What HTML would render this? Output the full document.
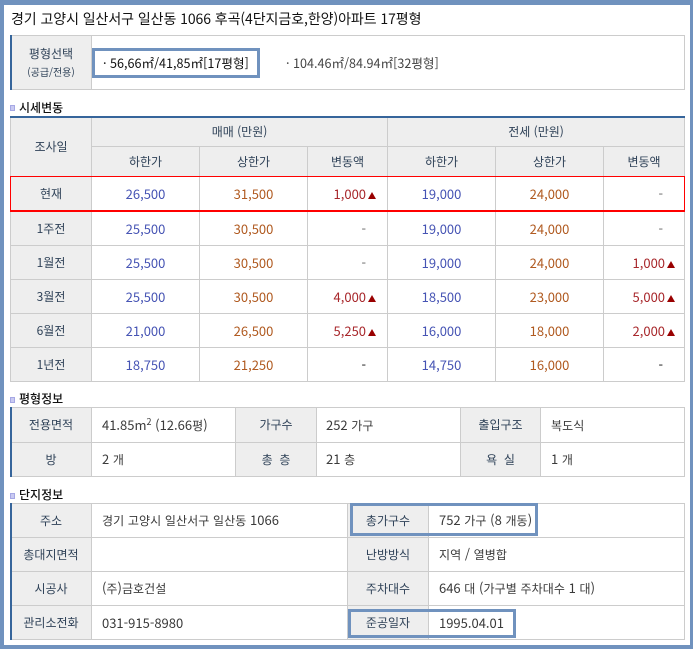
<!DOCTYPE html>
<html lang="ko"><head><meta charset="utf-8"><title>시세</title>
<style>
html,body{margin:0;padding:0}
body{width:693px;height:649px;overflow:hidden;background:#fff;position:relative;font:12px "Liberation Sans","Noto Sans CJK KR",sans-serif;color:#333}
body,td,div{font-family:"Noto Sans CJK KR","Liberation Sans",sans-serif}
#frame{position:absolute;left:0;top:0;width:693px;height:649px;box-sizing:border-box;border:solid #7092be;border-width:5px 3px 4px 4px}
.a{position:absolute}
h1{position:absolute;margin:0;left:11px;top:9px;font:400 14px/20px "Noto Sans CJK KR",sans-serif;color:#111;white-space:nowrap;letter-spacing:-.07px}
.h{position:absolute;left:19px;font-size:12px;line-height:16px;color:#111;font-weight:500;white-space:nowrap}
.ic{position:absolute;left:10px;width:3px;height:4px;background:#c9caf2;border:1px solid #a6a8e4}
table{position:absolute;left:10px;border-collapse:separate;border-spacing:0;table-layout:fixed;width:675px}
td{box-sizing:border-box;border-right:1px solid #ccc;border-bottom:1px solid #ccc;padding:0;text-align:center;vertical-align:middle;font-size:12px;line-height:14px;color:#444;white-space:nowrap;overflow:hidden}
td.f{border-left:1px solid #ccc}
.g{background:#eee;color:#2f4258}
.l{text-align:left;padding-left:10px;color:#3a3a3a;font-size:13px}
.l u{font-size:12px;text-decoration:none;letter-spacing:.08px}
.l.p{padding-left:9px}
.n{font-size:13px}
.b{color:#4654b4}.r{color:#b05a20}
.c{text-align:right;padding-right:11px;font-size:13px;color:#a8282c}
.c.e{padding-right:9px}
.d{text-align:right;padding-right:21px;font-size:13px;color:#666}
.t{display:inline-block;width:0;height:0;border-left:4.5px solid transparent;border-right:4.5px solid transparent;border-bottom:7px solid #990000;margin-left:2px;vertical-align:0}
.bar{position:absolute;left:10px;width:2px;background:#36659b}
.box{position:absolute;box-sizing:border-box;border:3px solid #7092be}
sup{font-size:9px;line-height:0;vertical-align:5px}
</style></head><body>
<div id="frame"></div>
<h1>경기 고양시 일산서구 일산동 1066 후곡(4단지금호,한양)아파트 17평형</h1>

<table style="top:35px;width:675px">
<colgroup><col style="width:82px"><col style="width:593px"></colgroup>
<tr><td class="g f" style="height:55px;border-top:1px solid #ccc;line-height:18px"><div style="font-size:12px">평형선택</div><div style="font-size:10px">(공급/전용)</div></td><td style="border-top:1px solid #ccc"></td></tr>
</table>
<div class="bar" style="top:35px;height:55px"></div>
<div class="a" style="left:103px;top:55px;font-size:12.6px;line-height:16px;color:#111;white-space:nowrap">· 56,66㎡/41,85㎡[17평형]</div>
<div class="a" style="left:286px;top:55px;font-size:12.6px;line-height:16px;color:#444;white-space:nowrap">· 104.46㎡/84.94㎡[32평형]</div>
<div class="box" style="left:92px;top:48px;width:168px;height:30px"></div>

<i class="ic" style="top:105px"></i><div class="h" style="top:100px">시세변동</div>
<div class="a" style="left:10px;top:116px;width:675px;height:2px;background:#36659b"></div>
<table style="top:118px">
<colgroup><col style="width:82px"><col style="width:108px"><col style="width:108px"><col style="width:80px"><col style="width:108px"><col style="width:108px"><col style="width:81px"></colgroup>
<tr><td class="g f" rowspan="2" style="height:59px">조사일</td><td class="g" colspan="3" style="height:29px">매매 (만원)</td><td class="g" colspan="3">전세 (만원)</td></tr>
<tr><td class="g" style="height:30px">하한가</td><td class="g">상한가</td><td class="g">변동액</td><td class="g">하한가</td><td class="g">상한가</td><td class="g">변동액</td></tr>
<tr><td class="g f" style="height:35px">현재</td><td class="n b">26,500</td><td class="n r">31,500</td><td class="c">1,000<i class="t"></i></td><td class="n b">19,000</td><td class="n r">24,000</td><td class="d">-</td></tr>
<tr><td class="g f" style="height:34px">1주전</td><td class="n b">25,500</td><td class="n r">30,500</td><td class="d">-</td><td class="n b">19,000</td><td class="n r">24,000</td><td class="d">-</td></tr>
<tr><td class="g f" style="height:34px">1월전</td><td class="n b">25,500</td><td class="n r">30,500</td><td class="d">-</td><td class="n b">19,000</td><td class="n r">24,000</td><td class="c e">1,000<i class="t"></i></td></tr>
<tr><td class="g f" style="height:34px">3월전</td><td class="n b">25,500</td><td class="n r">30,500</td><td class="c">4,000<i class="t"></i></td><td class="n b">18,500</td><td class="n r">23,000</td><td class="c e">5,000<i class="t"></i></td></tr>
<tr><td class="g f" style="height:34px">6월전</td><td class="n b">21,000</td><td class="n r">26,500</td><td class="c">5,250<i class="t"></i></td><td class="n b">16,000</td><td class="n r">18,000</td><td class="c e">2,000<i class="t"></i></td></tr>
<tr><td class="g f" style="height:34px">1년전</td><td class="n b">18,750</td><td class="n r">21,250</td><td class="d" style="color:#111">-</td><td class="n b">14,750</td><td class="n r">16,000</td><td class="d" style="color:#111">-</td></tr>
</table>
<div class="a" style="left:10px;top:176px;width:675px;height:36px;box-sizing:border-box;border:1px solid #f00;border-bottom-width:2px"></div>

<i class="ic" style="top:397px"></i><div class="h" style="top:391px">평형정보</div>
<table style="top:407px">
<colgroup><col style="width:82px"><col style="width:144px"><col style="width:81px"><col style="width:144px"><col style="width:80px"><col style="width:144px"></colgroup>
<tr><td class="g f" style="height:36px;border-top:1px solid #ccc">전용면적</td><td class="l" style="border-top:1px solid #ccc">41.85m<sup>2</sup> (12.66<u>평</u>)</td><td class="g" style="border-top:1px solid #ccc">가구수</td><td class="l p" style="border-top:1px solid #ccc">252 <u>가구</u></td><td class="g" style="border-top:1px solid #ccc">출입구조</td><td class="l" style="border-top:1px solid #ccc"><u>복도식</u></td></tr>
<tr><td class="g f" style="height:34px">방</td><td class="l">2 <u>개</u></td><td class="g">총 &nbsp;층</td><td class="l p">21 <u>층</u></td><td class="g">욕 &nbsp;실</td><td class="l">1 <u>개</u></td></tr>
</table>
<div class="bar" style="top:407px;height:70px"></div>

<i class="ic" style="top:493px"></i><div class="h" style="top:487px">단지정보</div>
<table style="top:503px">
<colgroup><col style="width:82px"><col style="width:256px"><col style="width:81px"><col style="width:256px"></colgroup>
<tr><td class="g f" style="height:35px;border-top:1px solid #ccc">주소</td><td class="l" style="border-top:1px solid #ccc"><u>경기</u> <u>고양시</u> <u>일산서구</u> <u>일산동</u> 1066</td><td class="g" style="border-top:1px solid #ccc">총가구수</td><td class="l" style="border-top:1px solid #ccc">752 <u>가구</u> (8 <u>개동</u>)</td></tr>
<tr><td class="g f" style="height:34px">총대지면적</td><td class="l"></td><td class="g">난방방식</td><td class="l"><u>지역</u> / <u>열병합</u></td></tr>
<tr><td class="g f" style="height:34px">시공사</td><td class="l">(<u>주</u>)<u>금호건설</u></td><td class="g">주차대수</td><td class="l">646 <u>대</u> (<u>가구별</u> <u>주차대수</u> 1 <u>대</u>)</td></tr>
<tr><td class="g f" style="height:34px">관리소전화</td><td class="l">031-915-8980</td><td class="g">준공일자</td><td class="l">1995.04.01</td></tr>
</table>
<div class="bar" style="top:503px;height:137px"></div>
<div class="box" style="left:350px;top:503px;width:188px;height:33px"></div>
<div class="box" style="left:348px;top:609px;width:168px;height:29px"></div>
</body></html>
